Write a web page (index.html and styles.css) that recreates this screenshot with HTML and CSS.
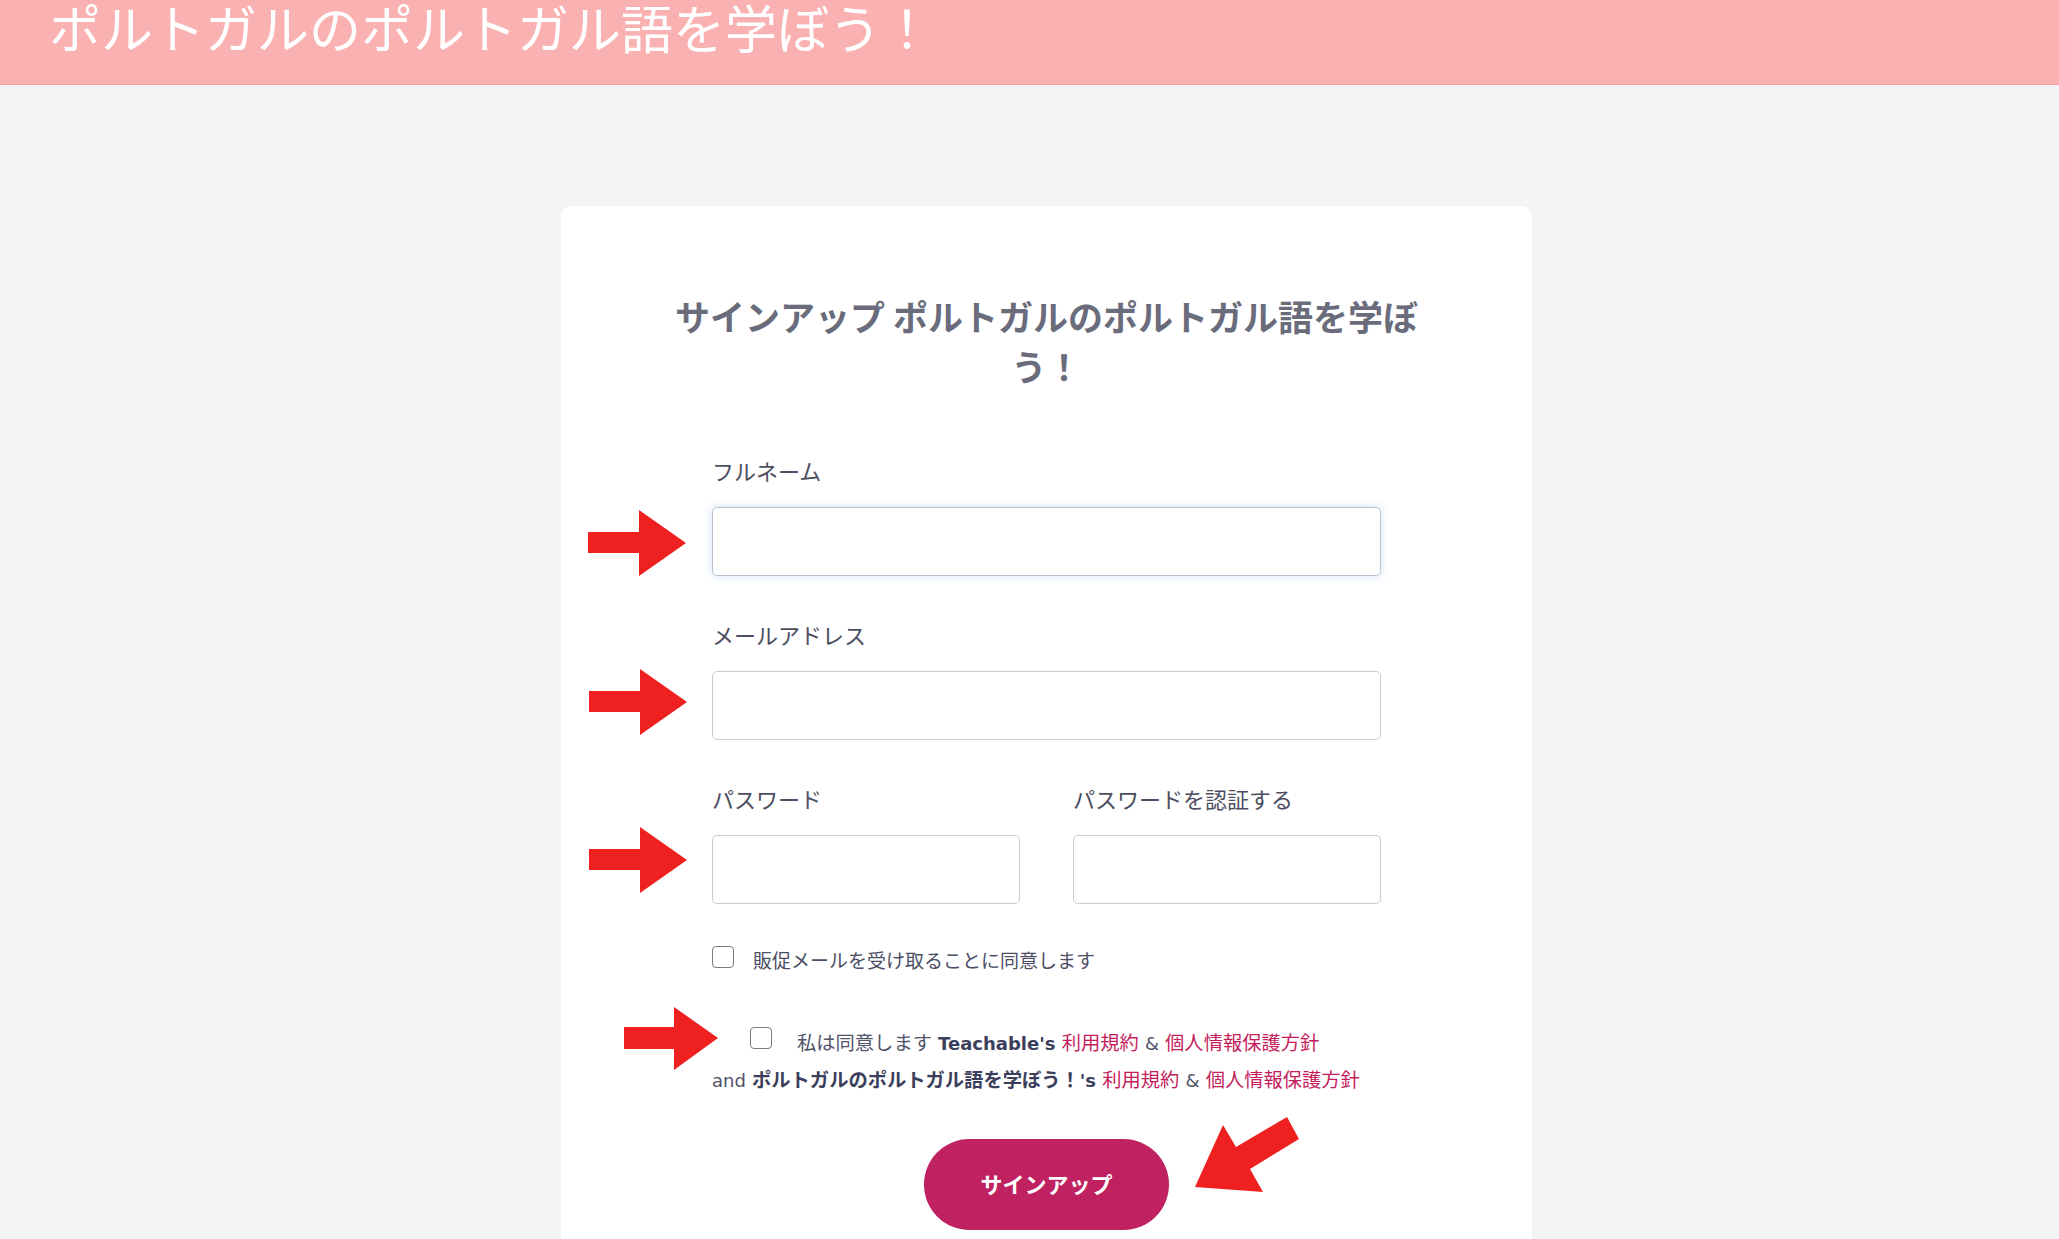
FILE: index.html
```html
<!DOCTYPE html>
<html lang="ja">
<head>
  <meta charset="UTF-8">
  <meta name="viewport" content="width=device-width, initial-scale=1.0">
  <title>サインアップ ポルトガルのポルトガル語を学ぼう！</title>
  <link rel="stylesheet" href="styles.css">
</head>
<body>
  <header class="site-header">ポルトガルのポルトガル語を学ぼう！</header>
  <main class="page">
    <div class="card">
      <h2 class="title">サインアップ ポルトガルのポルトガル語を学ぼう！</h2>
      <form class="signup" onsubmit="return false">
        <div class="field">
          <label for="name">フルネーム</label>
          <input type="text" id="name" class="focused">
        </div>
        <div class="field">
          <label for="email">メールアドレス</label>
          <input type="email" id="email">
        </div>
        <div class="field-row">
          <div class="field">
            <label for="password">パスワード</label>
            <input type="password" id="password">
          </div>
          <div class="field">
            <label for="confirm">パスワードを認証する</label>
            <input type="password" id="confirm">
          </div>
        </div>
        <label class="check">
          <input type="checkbox">
          <span>販促メールを受け取ることに同意します</span>
        </label>
        <p class="terms">
          <input type="checkbox" class="terms-box">私は同意します <b class="en">Teachable's</b> <a href="#">利用規約</a> <span class="en">&amp;</span> <a href="#">個人情報保護方針</a><br>
          <span class="en">and</span> <b>ポルトガルのポルトガル語を学ぼう！<span class="en">'s</span></b> <a href="#">利用規約</a> <span class="en">&amp;</span> <a href="#">個人情報保護方針</a>
        </p>
        <div class="actions">
          <button type="submit">サインアップ</button>
        </div>
      </form>

      <!-- annotation arrows -->
      <svg class="arrow arrow-1" width="98" height="66" viewBox="0 0 98 66"><polygon points="0,22 51,22 51,0 98,33 51,66 51,43 0,43"/></svg>
      <svg class="arrow arrow-2" width="98" height="66" viewBox="0 0 98 66"><polygon points="0,22 51,22 51,0 98,33 51,66 51,43 0,43"/></svg>
      <svg class="arrow arrow-3" width="98" height="66" viewBox="0 0 98 66"><polygon points="0,22 51,22 51,0 98,33 51,66 51,43 0,43"/></svg>
      <svg class="arrow arrow-4" width="94" height="63" viewBox="0 0 94 63"><polygon points="0,20 50,20 50,0 94,31 50,63 50,42 0,42"/></svg>
      <svg class="arrow arrow-5" width="104" height="75" viewBox="0 0 104 75"><polygon points="0,70 28,8 41,30 92,0 104,22 55,52 68,75"/></svg>
    </div>
  </main>
</body>
</html>
```

FILE: styles.css
```css
body {
  margin: 0;
  background: #f4f4f6;
  font-family: "DejaVu Sans", "Noto Sans CJK JP", sans-serif;
  color: #4a4d66;
}
.site-header {
  height: 84px;
  padding-left: 49px;
  background: #f9b1b1;
  border-bottom: 1px solid #f3a2a2;
  color: #fff;
  font-family: "Liberation Sans", "Noto Sans CJK JP", sans-serif;
  font-size: 52px;
  line-height: 63px;
  white-space: nowrap;
  overflow: hidden;
}
.page {
  display: flex;
  justify-content: center;
  padding: 121px 0 0 34px;
}
.card {
  position: relative;
  width: 971px;
  padding: 85px 0 40px;
  background: #fff;
  border-radius: 10px 10px 0 0;
}
.title {
  margin: 0 0 67px;
  padding: 0 100px;
  font-family: "Noto Sans CJK JP", sans-serif;
  font-size: 35px;
  font-weight: 700;
  line-height: 50px;
  color: #6a6c7c;
  text-align: center;
}
.signup {
  padding: 0 151px;
}
.field {
  margin-bottom: 46px;
}
.field label {
  display: block;
  margin-bottom: 19px;
  font-size: 22px;
  line-height: 30px;
  color: #4c4e60;
}
.field input {
  display: block;
  box-sizing: border-box;
  width: 100%;
  height: 69px;
  padding: 0 16px;
  border: 1px solid #cacbd0;
  border-radius: 5px;
  background: #fff;
  font-size: 20px;
}
.field input.focused {
  border-color: #b9c3d3;
  box-shadow: 0 0 9px rgba(120, 170, 230, 0.35);
}
.field input:focus {
  outline: none;
}
.field-row {
  display: grid;
  grid-template-columns: 1fr 1fr;
  gap: 53px;
}
.field-row .field {
  margin-bottom: 42px;
}
.check {
  display: flex;
  align-items: flex-start;
  gap: 19px;
  font-size: 19px;
  line-height: 30px;
  color: #4c4e66;
}
input[type="checkbox"] {
  appearance: none;
  box-sizing: border-box;
  width: 22px;
  height: 22px;
  margin: 0;
  border: 1.5px solid #7a7a80;
  border-radius: 4px;
  background: #fff;
}
.terms {
  margin: 49px 0 0;
  font-size: 19.3px;
  line-height: 37px;
  color: #50536a;
}
.terms .en {
  font-size: 18px;
}
.terms .terms-box {
  display: inline-block;
  margin: 0 25px 0 38px;
  vertical-align: 1px;
}
.terms b {
  color: #3c3f5c;
}
.terms a {
  color: #c41d5c;
  text-decoration: none;
}
.actions {
  display: flex;
  justify-content: center;
  margin-top: 40px;
}
.actions button {
  width: 245px;
  height: 91px;
  padding: 0 0 4px;
  border: none;
  border-radius: 46px;
  background: #c02160;
  color: #fff;
  font-family: "Noto Sans CJK JP", sans-serif;
  font-size: 22px;
  font-weight: 700;
  cursor: pointer;
}
.arrow {
  position: absolute;
  fill: #ef2020;
}
.arrow-1 { left: 27px; top: 304px; }
.arrow-2 { left: 28px; top: 463px; }
.arrow-3 { left: 28px; top: 621px; }
.arrow-4 { left: 63px; top: 801px; }
.arrow-5 { left: 634px; top: 911px; }
```
